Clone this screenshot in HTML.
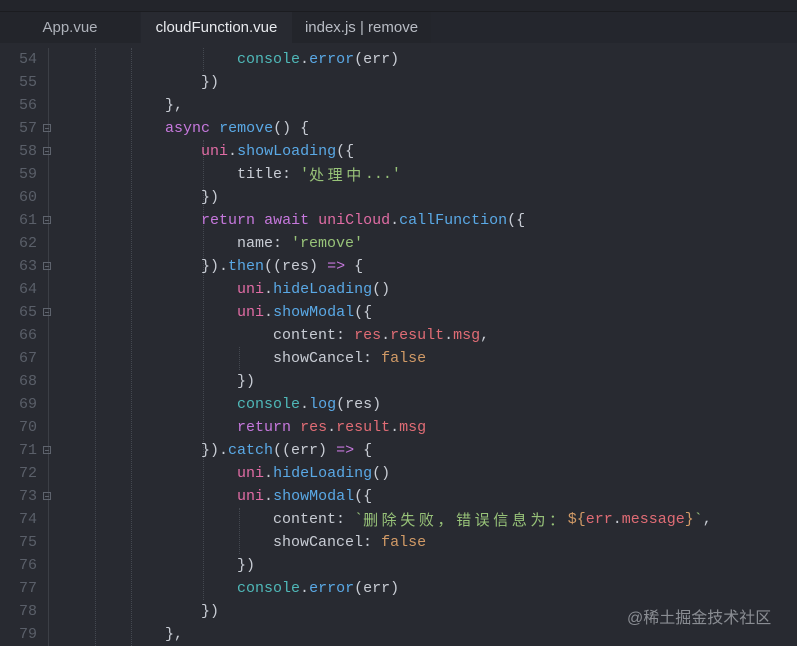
<!DOCTYPE html>
<html><head><meta charset="utf-8"><style>
body{margin:0;width:797px;height:646px;background:#282a31;overflow:hidden;position:relative;font-family:"Liberation Mono",monospace;}
.top{position:absolute;left:0;top:0;width:797px;height:11px;background:#23252b;border-bottom:1px solid #1b1c20;}
.tabs{position:absolute;left:0;top:12px;width:797px;height:31px;background:#24262d;}
.tab{position:absolute;top:0;height:31px;line-height:31px;font-family:"Liberation Sans",sans-serif;font-size:15px;color:#b8bcc4;text-align:center;}
.code{position:absolute;left:0;top:48px;width:797px;}
.l{height:23px;line-height:23px;font-size:15px;color:#c8ccd4;white-space:pre;position:relative;overflow:hidden;}
.n{position:absolute;left:0;width:37px;text-align:right;color:#5a5f69;}
.t{position:absolute;left:57px;top:0;}
.f{position:absolute;left:43px;top:7px;width:8px;height:8px;border:1px solid #5e636d;box-sizing:border-box;}
.f:after{content:"";position:absolute;left:1px;top:3px;width:4px;height:1px;background:#5e636d;}
.g{position:absolute;top:48px;width:0;border-left:1px dotted #444850;}
.c{color:#4fb8b8}.b{color:#5aa9e6}.k{color:#c678dd}.u{color:#e06ca4}.s{color:#98c379}.o{color:#d19a66}.r{color:#e06c75}
.cj{font-family:"Noto Sans CJK SC",sans-serif;letter-spacing:3.6px;display:inline-block;height:23px;line-height:23px;vertical-align:top;font-size:15px;}
.wm{position:absolute;left:627px;top:604px;font-family:"Liberation Sans","Noto Sans CJK SC",sans-serif;font-size:16px;color:#8a8d93;}
</style></head><body>
<div class="top"></div>
<div class="tabs">
<div class="tab" style="left:0;width:140px;background:#23252b;color:#aeb2ba">App.vue</div>
<div class="tab" style="left:141px;width:151px;background:#282a31;color:#e8eaee">cloudFunction.vue</div>
<div class="tab" style="left:292px;width:139px;background:#23252b;color:#b8bcc4">index.js | remove</div>
</div>
<div class="g" style="left:48px;height:598px;border-left:1px solid #3c3f46"></div>
<div class="g" style="left:95px;height:598px"></div>
<div class="g" style="left:131px;height:598px"></div>
<div class="g" style="left:203px;top:48px;height:23px"></div>
<div class="g" style="left:203px;top:140px;height:460px"></div>
<div class="g" style="left:239px;top:347px;height:23px"></div>
<div class="g" style="left:239px;top:508px;height:46px"></div>
<div class="code">
<div class="l"><span class="n">54</span><span class="t">                    <span class="c">console</span>.<span class="b">error</span>(err)</span></div>
<div class="l"><span class="n">55</span><span class="t">                })</span></div>
<div class="l"><span class="n">56</span><span class="t">            },</span></div>
<div class="l"><span class="n">57</span><i class="f"></i><span class="t">            <span class="k">async</span> <span class="b">remove</span>() {</span></div>
<div class="l"><span class="n">58</span><i class="f"></i><span class="t">                <span class="u">uni</span>.<span class="b">showLoading</span>({</span></div>
<div class="l"><span class="n">59</span><span class="t">                    title: <span class="s">'<span class="cj">处理中</span>...'</span></span></div>
<div class="l"><span class="n">60</span><span class="t">                })</span></div>
<div class="l"><span class="n">61</span><i class="f"></i><span class="t">                <span class="k">return</span> <span class="k">await</span> <span class="u">uniCloud</span>.<span class="b">callFunction</span>({</span></div>
<div class="l"><span class="n">62</span><span class="t">                    name: <span class="s">'remove'</span></span></div>
<div class="l"><span class="n">63</span><i class="f"></i><span class="t">                }).<span class="b">then</span>((res) <span class="k">=&gt;</span> {</span></div>
<div class="l"><span class="n">64</span><span class="t">                    <span class="u">uni</span>.<span class="b">hideLoading</span>()</span></div>
<div class="l"><span class="n">65</span><i class="f"></i><span class="t">                    <span class="u">uni</span>.<span class="b">showModal</span>({</span></div>
<div class="l"><span class="n">66</span><span class="t">                        content: <span class="r">res</span>.<span class="r">result</span>.<span class="r">msg</span>,</span></div>
<div class="l"><span class="n">67</span><span class="t">                        showCancel: <span class="o">false</span></span></div>
<div class="l"><span class="n">68</span><span class="t">                    })</span></div>
<div class="l"><span class="n">69</span><span class="t">                    <span class="c">console</span>.<span class="b">log</span>(res)</span></div>
<div class="l"><span class="n">70</span><span class="t">                    <span class="k">return</span> <span class="r">res</span>.<span class="r">result</span>.<span class="r">msg</span></span></div>
<div class="l"><span class="n">71</span><i class="f"></i><span class="t">                }).<span class="b">catch</span>((err) <span class="k">=&gt;</span> {</span></div>
<div class="l"><span class="n">72</span><span class="t">                    <span class="u">uni</span>.<span class="b">hideLoading</span>()</span></div>
<div class="l"><span class="n">73</span><i class="f"></i><span class="t">                    <span class="u">uni</span>.<span class="b">showModal</span>({</span></div>
<div class="l"><span class="n">74</span><span class="t">                        content: <span class="s">`<span class="cj">删除失败，错误信息为：</span></span><span class="o">${</span><span class="r">err</span>.<span class="r">message</span><span class="o">}</span><span class="s">`</span>,</span></div>
<div class="l"><span class="n">75</span><span class="t">                        showCancel: <span class="o">false</span></span></div>
<div class="l"><span class="n">76</span><span class="t">                    })</span></div>
<div class="l"><span class="n">77</span><span class="t">                    <span class="c">console</span>.<span class="b">error</span>(err)</span></div>
<div class="l"><span class="n">78</span><span class="t">                })</span></div>
<div class="l"><span class="n">79</span><span class="t">            },</span></div>
</div>
<div class="wm">@稀土掘金技术社区</div>
</body></html>
